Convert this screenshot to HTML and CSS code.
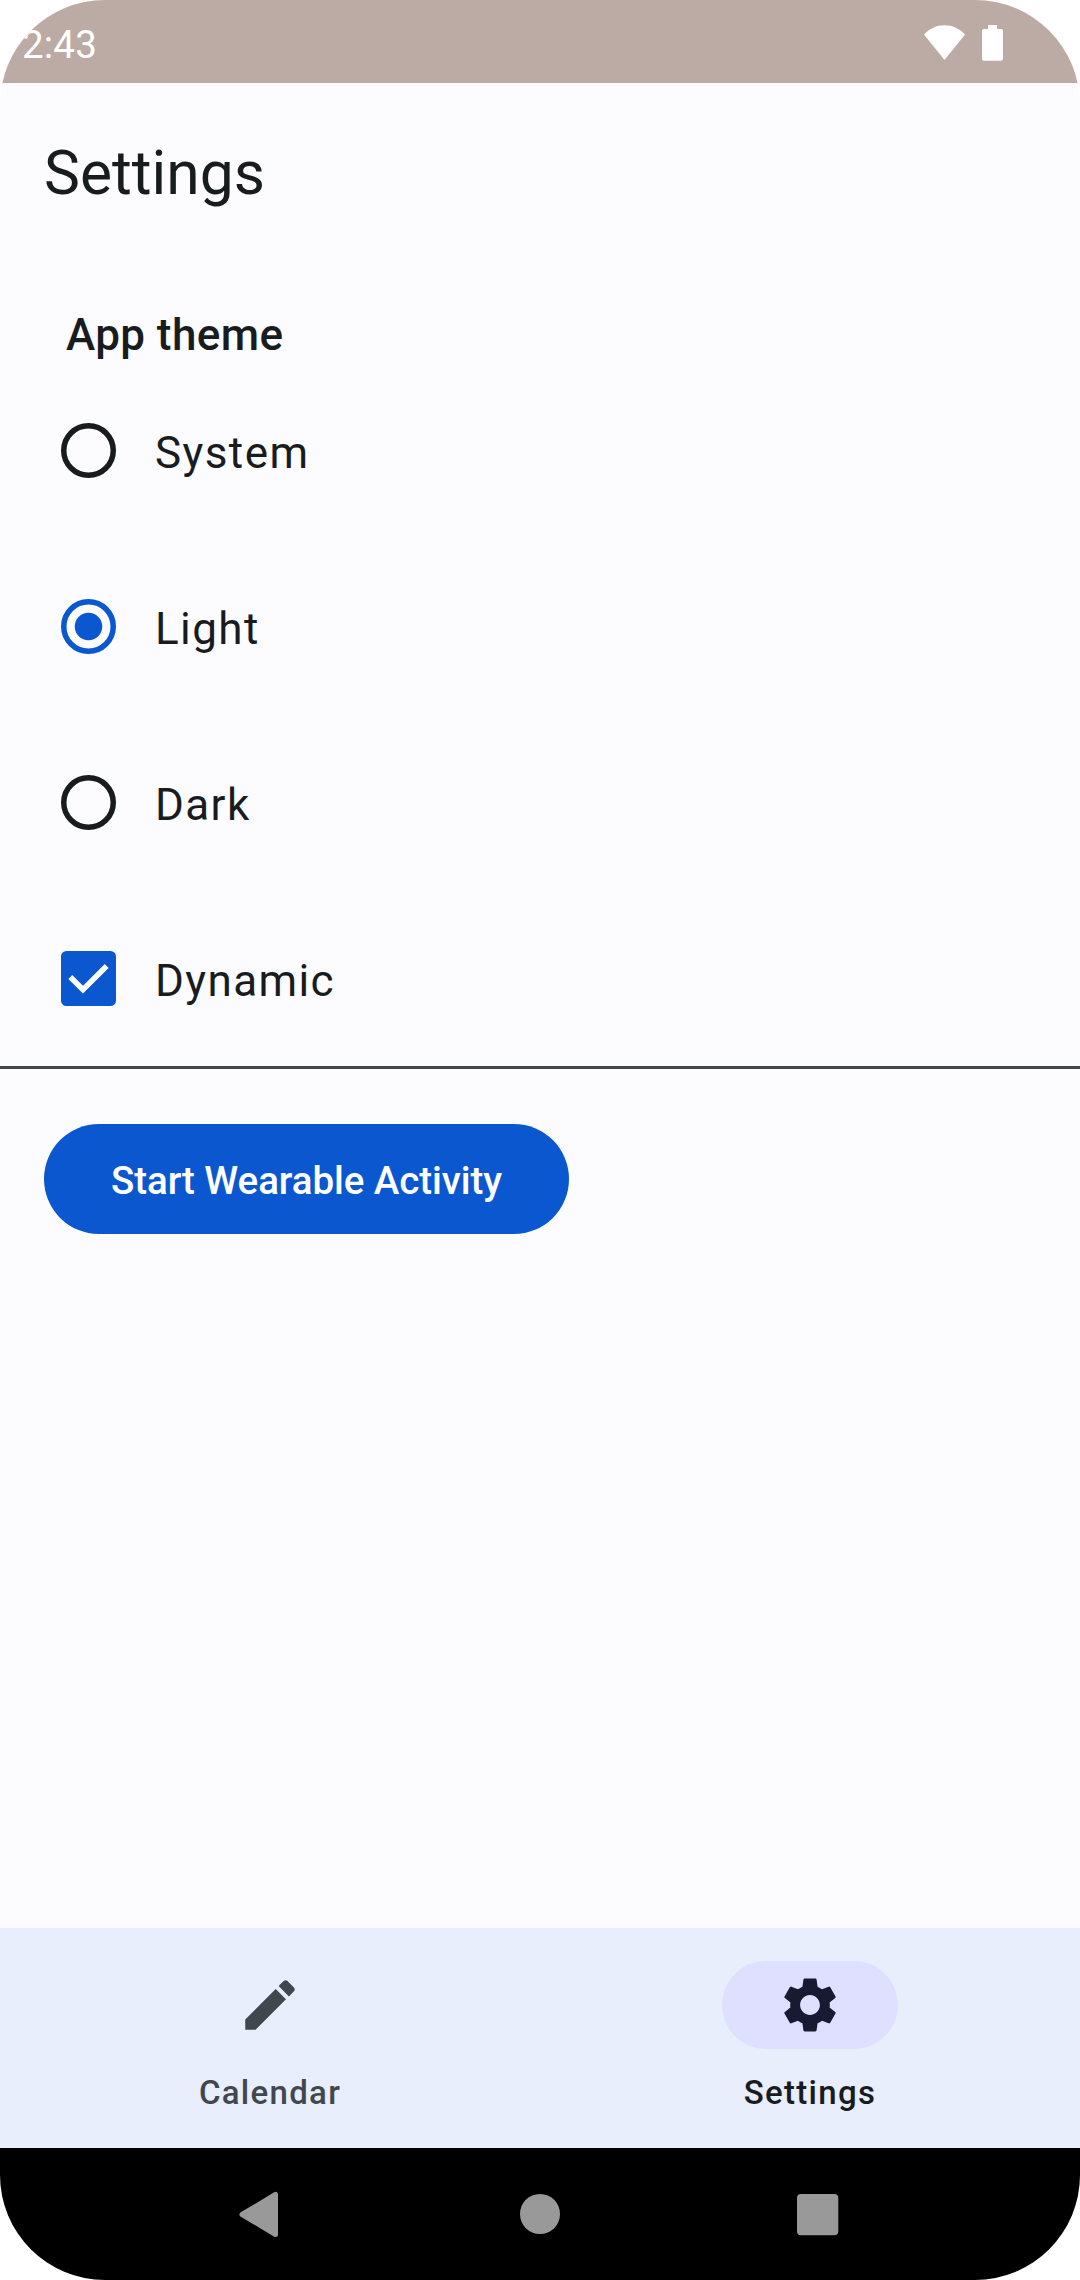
FILE: index.html
```html
<!DOCTYPE html>
<html lang="en">
<head>
<meta charset="utf-8">
<title>Settings</title>
<link rel="stylesheet" href="styles.css">
</head>
<body>
<div class="screen">
  <header class="status-bar">
    <span class="clock">2:43</span>
    <div class="status-icons">
      <svg width="41" height="36" viewBox="0 0 41 36" fill="#fff"><path d="M0 9.500C5.500 3.500 12.500 0.200 20.500 0.200S35.500 3.500 41 9.500L20.500 35z"/></svg>
      <svg width="21" height="36" viewBox="0 0 21 36" fill="#fff"><path d="M6 0h9v4h4q2 0 2 2v27.700q0 2-2 2H2q-2 0-2-2V6q0-2 2-2h4z"/></svg>
    </div>
  </header>

  <div class="app-bar"><h1 class="title">Settings</h1></div>

  <main class="content">
    <h2 class="section-title">App theme</h2>
    <div class="option">
      <svg width="55" height="55" viewBox="0 0 55 55"><circle cx="27.500" cy="27.500" r="24.750" fill="none" stroke="#191c1e" stroke-width="5.500"/></svg>
      <span class="option-label">System</span>
    </div>
    <div class="option">
      <svg width="55" height="55" viewBox="0 0 55 55"><circle cx="27.500" cy="27.500" r="24.750" fill="none" stroke="#0b57d0" stroke-width="5.500"/><circle cx="27.500" cy="27.500" r="13.750" fill="#0b57d0"/></svg>
      <span class="option-label">Light</span>
    </div>
    <div class="option">
      <svg width="55" height="55" viewBox="0 0 55 55"><circle cx="27.500" cy="27.500" r="24.750" fill="none" stroke="#191c1e" stroke-width="5.500"/></svg>
      <span class="option-label">Dark</span>
    </div>
    <div class="option">
      <svg width="55" height="55" viewBox="0 0 55 55"><rect width="55" height="55" rx="5.500" fill="#0b57d0"/><path d="M9.300 26L22 38.700L45.700 15" fill="none" stroke="#fff" stroke-width="5.500"/></svg>
      <span class="option-label">Dynamic</span>
    </div>
    <div class="divider"></div>
    <button class="button"><span>Start Wearable Activity</span></button>
  </main>

  <nav class="tabs">
    <div class="tab">
      <span class="indicator">
        <svg width="66" height="66" viewBox="0 0 24 24" fill="currentColor"><path d="M3 17.250V21h3.750L17.810 9.940l-3.750-3.750L3 17.250zM20.710 7.040c.39-.39.39-1.020 0-1.410l-2.340-2.340c-.39-.39-1.020-.39-1.410 0l-1.830 1.830 3.750 3.750 1.830-1.830z"/></svg>
      </span>
      <span class="tab-label">Calendar</span>
    </div>
    <div class="tab tab-active">
      <span class="indicator">
        <svg width="66" height="66" viewBox="0 0 24 24" fill="currentColor"><path d="M19.140 12.940c.04-.3.06-.61.06-.94 0-.32-.02-.64-.07-.94l2.030-1.580c.18-.14.23-.41.12-.61l-1.920-3.320c-.12-.22-.37-.29-.59-.22l-2.390.96c-.5-.38-1.030-.7-1.620-.94l-.36-2.540c-.04-.24-.24-.41-.48-.41h-3.840c-.24 0-.43.17-.47.41l-.36 2.540c-.59.24-1.130.57-1.620.94l-2.390-.96c-.22-.08-.47 0-.59.22L2.740 8.870c-.12.21-.08.47.12.61l2.030 1.580c-.05.3-.09.63-.09.94s.02.64.07.94l-2.030 1.580c-.18.14-.23.41-.12.61l1.920 3.320c.12.22.37.29.59.22l2.390-.96c.5.38 1.030.7 1.620.94l.36 2.540c.05.24.24.41.48.41h3.840c.24 0 .44-.17.47-.41l.36-2.540c.59-.24 1.130-.56 1.620-.94l2.390.96c.22.08.47 0 .59-.22l1.920-3.320c.12-.22.07-.47-.12-.61l-2.010-1.580zM12 15.600c-1.980 0-3.600-1.620-3.600-3.600s1.620-3.600 3.600-3.600 3.600 1.620 3.600 3.600-1.620 3.600-3.600 3.600z"/></svg>
      </span>
      <span class="tab-label">Settings</span>
    </div>
  </nav>

  <footer class="system-nav">
    <svg width="78" height="78" viewBox="0 0 78 78" fill="#999" stroke="#999"><path d="M19 39.500L52.500 19.500V59.500z" stroke-width="5" stroke-linejoin="round"/></svg>
    <svg width="78" height="78" viewBox="0 0 78 78" fill="#999"><circle cx="39" cy="39" r="20"/></svg>
    <svg width="78" height="78" viewBox="0 0 78 78" fill="#999"><rect x="18" y="19" width="41.300" height="41.300" rx="4"/></svg>
  </footer>
</div>
</body>
</html>
```
FILE: styles.css
```css
* { box-sizing: border-box; }
body {
  margin: 0;
  background: #fff;
  font-family: Roboto, sans-serif;
  color: #191c1e;
}
svg { display: block; flex: none; }
.screen {
  width: 1080px;
  height: 2280px;
  display: flex;
  flex-direction: column;
  overflow: hidden;
  border-radius: 105px;
  background: #fcfcff;
}
.status-bar {
  height: 83px;
  flex: none;
  display: flex;
  justify-content: space-between;
  align-items: flex-start;
  padding: 25px 77px 0 22px;
  background: #bcaba4;
  color: #fff;
}
.clock { font-size: 38.5px; line-height: 40px; letter-spacing: 0.2px; }
.status-icons { display: flex; gap: 17px; }
.app-bar {
  height: 176px;
  flex: none;
  display: flex;
  align-items: center;
  padding: 4px 44px 0;
}
.title { margin: 0; font-size: 60.5px; font-weight: 400; line-height: 77px; }
.content { flex: 1; }
.section-title {
  margin: 0;
  padding: 49px 66px 0;
  font-size: 44px;
  font-weight: 500;
  line-height: 54px;
  letter-spacing: 0.41px;
}
.option {
  height: 176px;
  display: flex;
  align-items: center;
  gap: 39px;
  padding: 1px 61px 0;
}
.option-label {
  padding-top: 5px;
  font-size: 44px;
  line-height: 66px;
  letter-spacing: 1.4px;
}
.divider { height: 3px; background: #41484d; }
.button {
  display: flex;
  align-items: center;
  justify-content: center;
  width: 525px;
  height: 110px;
  margin: 55px 44px 0;
  padding: 2px 0 0;
  border: 0;
  border-radius: 55px;
  background: #0b57d0;
  color: #fff;
  font: 500 38.5px/55px Roboto, sans-serif;
  letter-spacing: -0.07px;
  white-space: nowrap;
}
.tabs {
  height: 220px;
  flex: none;
  display: grid;
  grid-template-columns: 1fr 1fr;
  background: #e8eefc;
}
.tab {
  display: flex;
  flex-direction: column;
  align-items: center;
  gap: 22px;
  padding-top: 33px;
  color: #41484d;
}
.indicator {
  width: 176px;
  height: 88px;
  display: flex;
  align-items: center;
  justify-content: center;
  border-radius: 44px;
}
.tab-label { font-size: 33px; font-weight: 500; line-height: 44px; letter-spacing: 1.3px; }
.tab-active { color: #191c1e; }
.tab-active .indicator { background: #dfe0ff; color: #171a30; }
.system-nav {
  height: 132px;
  flex: none;
  display: flex;
  justify-content: center;
  align-items: center;
  gap: 200px;
  background: #000;
}
```
